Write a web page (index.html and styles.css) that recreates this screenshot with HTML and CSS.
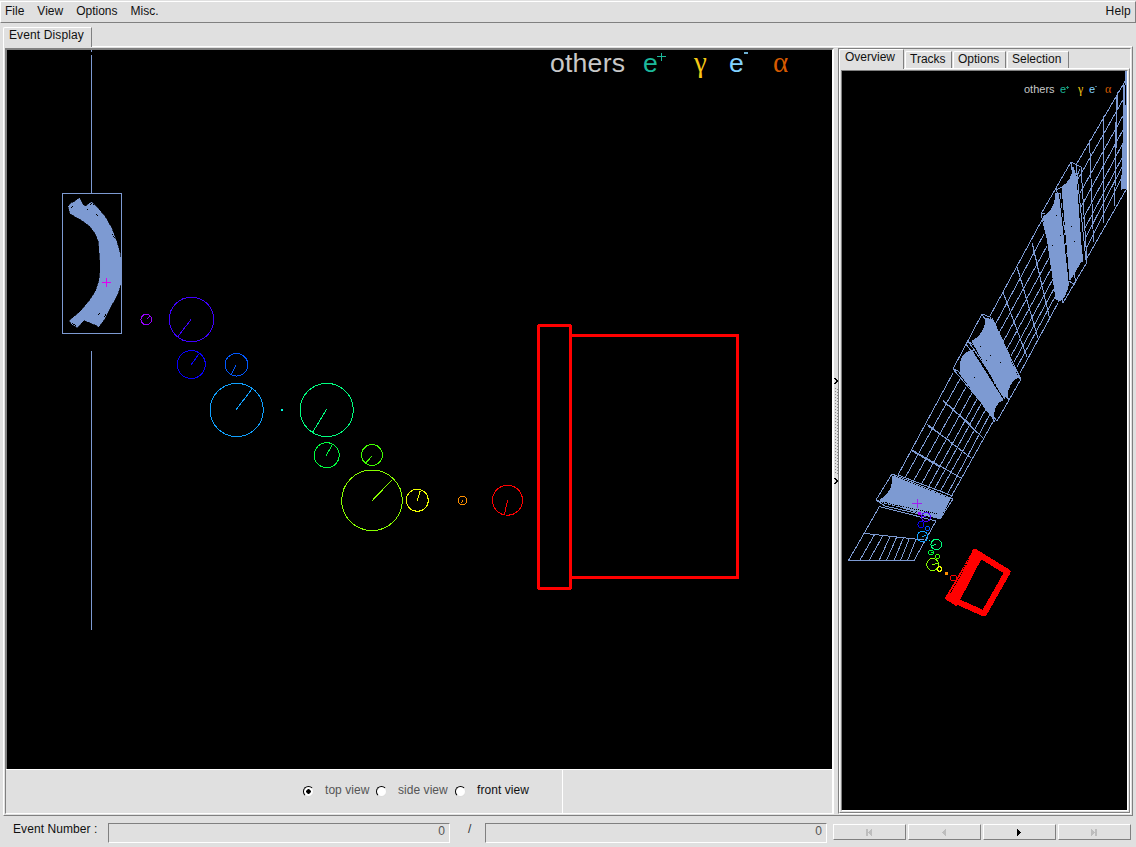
FILE: index.html
```html
<!DOCTYPE html>
<html lang="en">
<head>
<meta charset="utf-8">
<title>Event Display</title>
<link rel="stylesheet" href="styles.css">
</head>
<body>
<nav class="menubar"><span>File</span><span>View</span><span>Options</span><span>Misc.</span><span class="help">Help</span></nav>
<main class="notebook">
  <div class="main-tabs"><div class="tab main-tab">Event Display</div></div>
  <div class="frame">
    <section class="left-pane">
      <svg class="view" width="825" height="719" viewBox="7 50 825 719" fill="none">
        <g class="geometry">
          <path d="M91.5 50v2M91.5 55V193M91.5 351V630"/>
          <rect x="62.5" y="193.500" width="59" height="140"/>
          <path class="solid" transform="translate(50 180) scale(.33333)" d="M55 80L62 70 72 66 88 54 98 74 106 79 125 66 142 83 165 110 185 145 200 185 210 220 214 250 213 310 203 342 185 375 165 415 145 442 138 435 125 430 102 420 82 443 65 432 58 422 92 394 120 360 138 332 148 300 151 270 150 240 146 185 137 162 120 139 98 122 75 109 60 100Z"/>
        </g>
        <path class="pits" d="M96 214l3 3M112 234l3 5M98 315l3-3M72 323l4 3M90 205l2-2 2 2M104 317l2-3M71 208l3-3M87 209h1"/>
        <path class="dots" stroke="#e000f0" d="M102 282.500h9M106.500 278v9"/>
        <g class="hits">
          <g stroke="#9800ff"><circle cx="146.200" cy="319.500" r="5.300"/><path d="M146.500 319.500l3-3"/></g>
          <g stroke="#4000ff"><circle cx="191.500" cy="319.500" r="22.300"/><path d="M191 319.500L178 336.500"/></g>
          <g stroke="#0800ff"><circle cx="191.300" cy="364.500" r="14"/><path d="M191.300 364.500L199.300 353.500"/></g>
          <g stroke="#0058ff"><circle cx="236.500" cy="364.700" r="11.300"/><path d="M236.300 364.500L231.300 374.500"/></g>
          <g stroke="#10a0ff"><circle cx="236.700" cy="410" r="26.600"/><path d="M236.300 409.500L252.300 388.500"/></g>
          <path stroke="#00ffe0" stroke-width="2" d="M281 410h2"/>
          <g stroke="#00ff80"><circle cx="326.700" cy="410" r="26.600"/><path d="M326.500 409.500L312.500 432.500"/></g>
          <g stroke="#00ff40"><circle cx="326.700" cy="455.200" r="12.500"/><path d="M326.300 455.500L332.300 444.500"/></g>
          <g stroke="#40ff00"><circle cx="372" cy="455" r="10.500"/><path d="M372.300 455.500L366.300 462.500"/></g>
          <g stroke="#88ff00"><circle cx="372" cy="500.300" r="30.300"/><path d="M372.300 500.500L392.300 479.500"/></g>
          <g stroke="#efff00"><circle cx="417.300" cy="500.300" r="11"/><path d="M417.300 500.500L420.300 490.500"/></g>
          <g stroke="#ff9000"><circle cx="462.500" cy="500.400" r="4.400"/><path d="M462.500 500.500l-1 3"/></g>
          <g stroke="#ff0000"><circle cx="507.500" cy="500.200" r="15"/><path d="M507.500 500.500L504.500 514.500"/></g>
        </g>
        <g class="detector"><rect x="538.500" y="325.500" width="32" height="263" rx="1"/><path d="M571 335.500H737.500V577.500H571"/></g>
        <g class="legend">
          <text x="550" y="71.500" fill="#c8c8c8" textLength="75">others</text>
          <text x="643" y="71.500" fill="#1cb89a">e</text><path stroke="#1cb89a" stroke-width="1.400" d="M657 56.700h9M661.500 52.500v8.500"/>
          <text class="greek" x="694" y="71.500" fill="#f5c816">γ</text>
          <text x="729" y="71.500" fill="#82d2ff">e</text><path stroke="#6baed0" stroke-width="2" d="M744 53h4"/>
          <text class="greek" x="773" y="71.500" fill="#d65a00">α</text>
        </g>
      </svg>
      <div class="view-options">
        <div class="choices">
          <label class="muted"><i class="radio on"></i><span>top view</span></label>
          <label class="muted"><i class="radio"></i><span>side view</span></label>
          <label><i class="radio"></i><span>front view</span></label>
        </div>
      </div>
    </section>
    <div class="splitter"><svg width="6" height="108" viewBox="0 0 6 108"><path class="chevron" d="M1.500 1L4.500 4 1.500 7M1.500 101L4.500 104 1.500 107"/><path class="grip" d="M2.500 11V98"/><path class="grip" d="M4.500 12V98"/></svg></div>
    <section class="right-pane">
      <div class="side-tabs"><div class="tab active">Overview</div><div class="tab tracks">Tracks</div><div class="tab options">Options</div><div class="tab selection">Selection</div></div>
      <div class="page">
        <svg class="overview" width="285" height="739" viewBox="842 71 285 739" fill="none">
          <g class="geometry">
            <!-- entrance section -->
            <path d="M1127 78L1076 165M1127 188L1087 258M1089.500 140L1093.500 242M1103.500 116V223M1117.500 92L1114.500 206M1125.500 71L1121.500 190M1126.500 71V188M1123.500 85L1124.500 188M1116.500 95L1115.500 150"/>
            <path d="M1078 179L1124 98M1080 193L1124 114M1081 207L1123 130M1083 219L1123 143M1084 230L1123 156M1085 239L1122 167M1086 249L1122 177"/>
            <path class="solid" d="M1124 115L1127 100V188H1122Z"/>
            <!-- first pair of magnets -->
            <path d="M1071 162L1041 214 1063 303 1087 262 1081 167ZM1071 162L1083 262M1041 214L1045 213M1056 187L1076 283M1076 165L1086 260M1080 169L1076 178M1056 190L1062 187M1069 281L1075 285M1043 216L1059 302"/>
            <path class="solid" d="M1044 216Q1055 211 1056 193L1060 193 1069 283Q1065 299 1060 301L1056 299ZM1062 187Q1073 180 1073 167L1076 176 1082 260 1070 280Z"/>
            <!-- middle section -->
            <path d="M1042 220L990 316M1058 303L1020 373M1032 243L1050 320M1017 267L1038 338M1003 292L1027 357M1033 246L1043 290M1018 270L1029 307"/>
            <path d="M995 325L1044 234M999 333L1047 246M1003 342L1049 258M1007 349L1051 269M1011 356L1053 279M1014 362L1055 287M1017 367L1056 295"/>
            <!-- second pair of magnets -->
            <path d="M982 314L953 369 997 421 1021 379 990 317ZM968 341L1009 400M982 314L1017 376M966 344L1005 399M992 318L1019 376M953 369L958 371 994 418M1017 376L1021 379M968 341L973 345M1006 397L1010 400"/>
            <path class="solid" d="M972 341Q985 335 986 318L992 320 1018 377Q1008 382 1007 397L1002 395ZM961 375Q957 354 973 350L1003 400Q992 404 994 420Z"/>
            <!-- lower section -->
            <path d="M953 373L898 475M994 420L951 497M912 450L961 478M927 424L971 458M943 400L983 438M943 401L971 425M928 426L950 441M912 451L940 467"/>
            <path d="M905 478L960 379M913 482L966 387M921 485L972 393M928 488L977 399M934 490L981 404M940 492L986 409M947 495L990 414"/>
            <!-- last magnet -->
            <path d="M892 474L876 500 940 519 953 499ZM898 475L953 496M876 500L885 506 937 518M880 502L937 516"/>
            <path class="solid" d="M893 476L950 499 940 518 880 500Q893 493 893 476Z"/>
            <path d="M879.500 506.500L936 521 914 560.500H848.500ZM865 533.500L924 540M874.300 535L860 560M882.700 536L869.300 560M890 536.500L879.300 560M896.700 537L886.700 560M903.300 538L894.300 560M909.300 538.500L900.700 560M916 539.500L907.700 560"/>
          </g>
          <path class="gap" d="M1059.500 194L1069 281M974 352L1003 398"/>
          <path class="pits" d="M970 346L1003 398M1056 215h1M1060 235h1M1052 245h1M1071 226h1M1074 241h1M986 360h1M1000 362h1M974 377h1M990 355h1M980 346h1M881 502L938 514"/>
          <path class="dots" stroke="#a020f0" d="M912 503.500h10M917.500 499v9"/>
          <g class="hits">
            <path stroke="#9800ff" stroke-width="3" d="M918 513.500h3"/>
            <g stroke="#5000ff"><circle cx="926" cy="517" r="4.500"/><path d="M926 517l-4-1"/></g>
            <circle stroke="#0800ff" cx="921" cy="524.500" r="3"/>
            <circle stroke="#0058ff" cx="927.500" cy="528.500" r="2"/>
            <g stroke="#10a0ff"><circle cx="922.500" cy="536.500" r="5.300"/><path d="M922 537l4-2"/></g>
            <path stroke="#00ffe0" d="M929 540.500h1"/>
            <g stroke="#00ff80"><circle cx="936.300" cy="544.500" r="5.300"/><path d="M936 544l-4 2"/></g>
            <g stroke="#00ff40"><circle cx="931" cy="552.500" r="2.400"/><path d="M931 553l2-1"/></g>
            <circle stroke="#40ff00" cx="937.500" cy="556.500" r="2"/>
            <g stroke="#88ff00"><circle cx="932.700" cy="564.500" r="6"/><path d="M932 565l6-2"/></g>
            <circle stroke="#efff00" cx="939.500" cy="569" r="2.200"/>
            <path stroke="#ff9000" stroke-width="3" d="M945 573.500h3"/>
            <circle stroke="#f00" cx="953.500" cy="578" r="3"/>
          </g>
          <path class="overview-detector" d="M975 550.500L947 598 956 604 981 556Z"/>
          <path class="overview-box" d="M975 552L1007.500 572 984 613.500 949 598"/>
          <path class="pits" stroke-dasharray="2 2" d="M969 559L950 594"/>
          <g class="legend small">
            <text x="1024" y="93" fill="#c8c8c8">others</text><text x="1060" y="93" fill="#1cb89a">e</text><path stroke="#168a70" d="M1066 87.500h3M1067.500 86v3"/>
            <text class="greek" x="1078" y="93" fill="#f5c816">γ</text><text x="1089" y="93" fill="#82d2ff">e</text><path stroke="#446d82" d="M1095 86.500h2"/><text class="greek" x="1105" y="93" fill="#d65a00">α</text>
          </g>
        </svg>
      </div>
    </section>
  </div>
</main>
<footer class="status">
  <span class="event-label">Event Number :</span><div class="field">0</div><span class="slash">/</span><div class="field">0</div>
  <div class="buttons">
    <button disabled><svg width="7" height="7"><path d="M0 0h2v7H0zM2 3.500L6 0V7Z"/></svg></button>
    <button disabled><svg width="7" height="7"><path d="M1 3.500L5 0V7Z"/></svg></button>
    <button><svg width="7" height="7"><path d="M1 0L5 3.500 1 7Z"/></svg></button>
    <button disabled><svg width="7" height="7"><path d="M0 0L4 3.500 0 7ZM4 0h2v7H4z"/></svg></button>
  </div>
</footer>
</body>
</html>
```
FILE: styles.css
```css
* { box-sizing: border-box; }
body { margin: 0; width: 1136px; height: 847px; display: flex; flex-direction: column; overflow: hidden; background: #e0e0e0; color: #101010; font: 12px/14px "Liberation Sans", Arial, sans-serif; }
svg { display: block; shape-rendering: crispEdges; }
.menubar { display: flex; gap: 13px; height: 22px; margin-top: 1px; padding: 2px 4px 0; border-top: 1px solid #fff; border-left: 1px solid #fff; border-bottom: 1px solid #808080; border-right: 1px solid #808080; }
.help { margin-left: auto; letter-spacing: .2px; }
.notebook { height: 793px; padding: 4px 3px 0; }
.tab { border-top: 1px solid #fff; border-left: 1px solid #fff; border-right: 1px solid #808080; border-top-left-radius: 2px; white-space: nowrap; background: #e0e0e0; }
.main-tabs { height: 19px; display: flex; }
.main-tab { width: 89px; height: 20px; padding: 0 0 0 5px; letter-spacing: .12px; position: relative; z-index: 1; }
.frame { width: 1130px; height: 770px; display: flex; padding: 1px; border: 1px solid #808080; border-top-color: #fff; border-left-color: #fff; }
.left-pane { width: 829px; height: 766px; background: #e0e0e0; border-top: 2px solid #808080; border-left: 1px solid #808080; border-right: 2px solid #fff; border-bottom: 1px solid #fff; }
.view { background: #000; margin-left: 1px; box-shadow: -1px 0 #808080; overflow: visible; }
.view-options { height: 44px; border-top: 1px solid #fff; }
.choices { display: flex; width: 557px; height: 43px; border-right: 1px solid #fff; padding: 13px 0 0 297px; }
.choices label { display: flex; width: 73px; gap: 11px; white-space: nowrap; letter-spacing: .05px; }
.choices label + label { width: 79px; }
.muted { color: #555; }
.radio { width: 11px; height: 11px; margin-top: 3px; border-radius: 50%; background: #fff; border: 1px solid; border-color: #000 #ddd #ddd #000; flex: none; }
.on { background: radial-gradient(circle, #000 0 2px, #fff 2.500px); }
.splitter { width: 4px; padding-top: 329px; flex: none; }
.splitter svg { position: relative; left: -1px; z-index: 1; }
.chevron { fill: none; stroke: #000; stroke-width: 1.500; }
.grip { stroke: #888; stroke-dasharray: 1 2; }
.right-pane { width: 293px; height: 766px; border: 1px solid #808080; border-right-color: #fff; border-bottom-color: #fff; }
.side-tabs { height: 19px; display: flex; align-items: flex-end; }
.side-tabs .tab { height: 17px; padding: 0 0 0 4px; }
.side-tabs .active { width: 65px; height: 20px; margin-bottom: -1px; padding: 0 0 0 5px; position: relative; z-index: 1; }
.tracks { width: 47px; margin-left: 1px; }
.options { width: 53px; margin-left: 1px; }
.selection { width: 62px; margin-left: 1px; }
.page { width: 291px; height: 745px; padding: 1px; border: 1px solid #808080; border-top-color: #fff; border-left-color: #fff; }
.overview { box-sizing: content-box; background: #000; border: 1px solid #808080; border-right-color: #fff; border-bottom-color: #fff; }
.geometry { stroke: #7d9ad2; }
.geometry .solid { fill: #7d9ad2; }
.gap { stroke: #000; }
.pits { stroke: #000; stroke-dasharray: 1 1; }
.detector { stroke: red; stroke-width: 3; }
.overview-detector { stroke: red; fill: red; stroke-width: 3.500; stroke-linejoin: round; }
.overview-box { stroke: red; stroke-width: 6; stroke-linejoin: round; stroke-linecap: round; }
.legend { font: 26.6px "Liberation Sans", Arial, sans-serif; }
.greek { font-family: "Liberation Serif", "Times New Roman", serif; font-size: 29px; stroke: currentColor; stroke-width: 0; }
.small { font-size: 11px; }
.small .greek { font-size: 12px; }
.status { display: flex; height: 31px; padding: 7px 0 0 13px; white-space: nowrap; }
.event-label { width: 95px; margin-top: -1px; letter-spacing: .08px; }
.field { width: 342px; height: 20px; padding: 0 4px 0 0; border: 1px solid #fff; border-top-color: #808080; border-left-color: #808080; color: #555; text-align: right; }
.slash { width: 35px; padding-left: 18px; margin-top: -1px; color: #333; }
.buttons { display: flex; gap: 2px; margin: 1px 0 0 6px; height: 16px; }
.buttons button { width: 73px; height: 16px; display: grid; place-items: center; padding: 0; background: #e0e0e0; border: 1px solid #fff; border-right-color: #808080; border-bottom-color: #808080; }
.buttons button svg { fill: #000; }
.buttons button:disabled svg { fill: #bdbdbd; }
```
